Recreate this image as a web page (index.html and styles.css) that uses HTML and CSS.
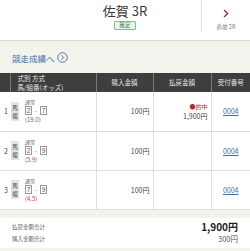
FILE: index.html
```html
<!DOCTYPE html>
<html lang="ja">
<head>
<meta charset="utf-8">
<link rel="stylesheet" href="styles.css">
</head>
<body>
<header class="top">
  <div class="top-spacer"></div>
  <div class="top-center">
    <div class="title">佐賀 3R</div>
    <span class="badge">確定</span>
  </div>
  <div class="top-nav">
    <svg class="nav-arrow" width="6" height="9" viewBox="0 0 6 9"><path d="M1 1 L4.8 4.5 L1 8" fill="none" stroke="#a3262a" stroke-width="1.3"/></svg>
    <span class="nav-label">直前 2R</span>
  </div>
</header>
<main class="main">
  <div class="link-row">
    <a class="link">競走成績へ</a>
    <svg class="link-icon" width="11" height="11" viewBox="0 0 11 11"><circle cx="5.5" cy="5.5" r="4.8" fill="none" stroke="#3d6fa8" stroke-width="0.9"/><path d="M4.5 3.3 L6.7 5.5 L4.5 7.7" fill="none" stroke="#3d6fa8" stroke-width="1"/></svg>
  </div>
  <table class="tbl">
    <colgroup><col class="c0"><col class="c1"><col class="c2"><col class="c3"><col class="c4"></colgroup>
    <thead>
      <tr>
        <th class="h0"></th>
        <th class="h1">式別 方式<br>馬/組番(オッズ)</th>
        <th>購入金額</th>
        <th>払戻金額</th>
        <th>受付番号</th>
      </tr>
    </thead>
    <tbody>
      <tr>
        <td class="num">1</td>
        <td class="bet">
          <div class="bet-wrap">
            <span class="kind">馬<br>複</span>
            <div class="detail">
              <div class="mode">通常</div>
              <div class="combo"><span class="box">2</span><span class="dash">-</span><span class="box">7</span></div>
              <div class="odds dark">(19.0)</div>
            </div>
          </div>
        </td>
        <td class="amt">100円</td>
        <td class="amt"><div class="hit">●的中</div><div>1,900円</div></td>
        <td class="rcpt"><a>0004</a></td>
      </tr>
      <tr>
        <td class="num">2</td>
        <td class="bet">
          <div class="bet-wrap">
            <span class="kind">馬<br>複</span>
            <div class="detail">
              <div class="mode">通常</div>
              <div class="combo"><span class="box">2</span><span class="dash">-</span><span class="box">9</span></div>
              <div class="odds">(5.9)</div>
            </div>
          </div>
        </td>
        <td class="amt">100円</td>
        <td class="amt"></td>
        <td class="rcpt"><a>0004</a></td>
      </tr>
      <tr>
        <td class="num">3</td>
        <td class="bet">
          <div class="bet-wrap">
            <span class="kind">馬<br>複</span>
            <div class="detail">
              <div class="mode">通常</div>
              <div class="combo"><span class="box">7</span><span class="dash">-</span><span class="box">9</span></div>
              <div class="odds">(4.5)</div>
            </div>
          </div>
        </td>
        <td class="amt">100円</td>
        <td class="amt"></td>
        <td class="rcpt"><a>0004</a></td>
      </tr>
    </tbody>
  </table>
  <section class="summary">
    <div class="sum-row"><span class="sum-label">払戻金額合計</span><span class="sum-big">1,900円</span></div>
    <div class="sum-row"><span class="sum-label">購入金額合計</span><span class="sum-small">300円</span></div>
  </section>
</main>
</body>
</html>
```
FILE: styles.css
```css
* { box-sizing: border-box; }
html, body { margin: 0; padding: 0; }
body {
  width: 250px;
  height: 251px;
  overflow: hidden;
  background: #f3f2ec;
  font-family: "Noto Sans CJK JP", "Noto Sans", sans-serif;
  color: #333;
}
.top {
  display: grid;
  grid-template-columns: 49px 1fr 49px;
  height: 41px;
  background: #fff;
  border-bottom: 1px solid #dcdcd6;
}
.top-center {
  display: flex;
  flex-direction: column;
  align-items: center;
  padding-top: 2px;
}
.title {
  font-size: 13px;
  line-height: 17px;
  color: #3a3a3a;
}
.badge {
  margin-top: 2px;
  font-size: 5.5px;
  line-height: 7px;
  padding: 0 4px;
  border: 1px solid #8cbc8a;
  background: #eaf4e8;
  color: #3f7d3f;
  border-radius: 1px;
}
.top-nav {
  border-left: 1px solid #e2e2e2;
  margin: 0 0 8px;
  display: flex;
  flex-direction: column;
  align-items: center;
  padding-top: 9px;
}
.nav-label {
  margin-top: 5px;
  font-size: 5.5px;
  color: #777;
}
.main { display: flex; flex-direction: column; }
.link-row {
  display: flex;
  align-items: center;
  gap: 2px;
  padding: 1px 0 0 12px;
  height: 32px;
}
.link {
  font-size: 8.5px;
  color: #3d6fa8;
}
.tbl {
  width: 250px;
  border-collapse: collapse;
  table-layout: fixed;
  background: #fff;
  font-size: 7px;
}
.c0 { width: 10px; }
.c1 { width: 86px; }
.c2 { width: 57px; }
.c3 { width: 58px; }
.c4 { width: 39px; }
.tbl th {
  background: #3e3e3e;
  color: #e6e6e6;
  font-weight: normal;
  font-size: 6.5px;
  line-height: 9px;
  height: 19px;
  padding: 0;
  border-left: 1px solid #777;
  text-align: center;
}
.tbl th.h0 { border-left: none; }
.tbl th.h1 { text-align: left; padding-left: 7px; }
.tbl td {
  height: 39px;
  border-bottom: 1px solid #dedede;
  border-left: 1px solid #dedede;
  padding: 0;
  vertical-align: middle;
}
.tbl td.num {
  border-left: none;
  text-align: center;
  padding-left: 2px;
  color: #444;
}
.tbl td.bet { border-left: none; }
.bet-wrap {
  display: flex;
  align-items: center;
  gap: 6px;
  padding-left: 1px;
}
.kind {
  background: #e4e4e4;
  width: 8px;
  height: 19px;
  font-size: 6px;
  line-height: 8px;
  text-align: center;
  color: #555;
  padding-top: 2px;
}
.detail { display: flex; flex-direction: column; }
.mode { font-size: 5px; line-height: 7px; color: #666; }
.combo { display: flex; align-items: center; gap: 2px; margin: 1px 0; }
.box {
  display: inline-block;
  width: 7px;
  height: 9px;
  border: 1px solid #999;
  font-family: "Liberation Sans", sans-serif;
  font-size: 6.5px;
  line-height: 7px;
  text-align: center;
  color: #555;
}
.dash { font-size: 6px; color: #666; padding: 0 1px; }
.odds { font-size: 6px; line-height: 8px; color: #c0463c; }
.odds.dark { color: #666; }
.tbl td.amt { text-align: right; padding-right: 3px; color: #444; }
.hit { color: #c8202a; font-size: 6px; line-height: 9px; }
.tbl td.rcpt { text-align: center; }
.rcpt a { color: #3d6fa8; text-decoration: underline; font-size: 7px; }
.summary {
  margin-top: 8px;
  background: #fff;
  padding: 3px 12px;
  height: 30px;
}
.sum-row {
  display: flex;
  justify-content: space-between;
  align-items: center;
  height: 12px;
}
.sum-label { font-size: 5.5px; line-height: 12px; color: #666; }
.sum-big { font-size: 10px; line-height: 12px; font-weight: bold; color: #222; }
.sum-small { font-size: 7.5px; line-height: 12px; color: #555; }
```
